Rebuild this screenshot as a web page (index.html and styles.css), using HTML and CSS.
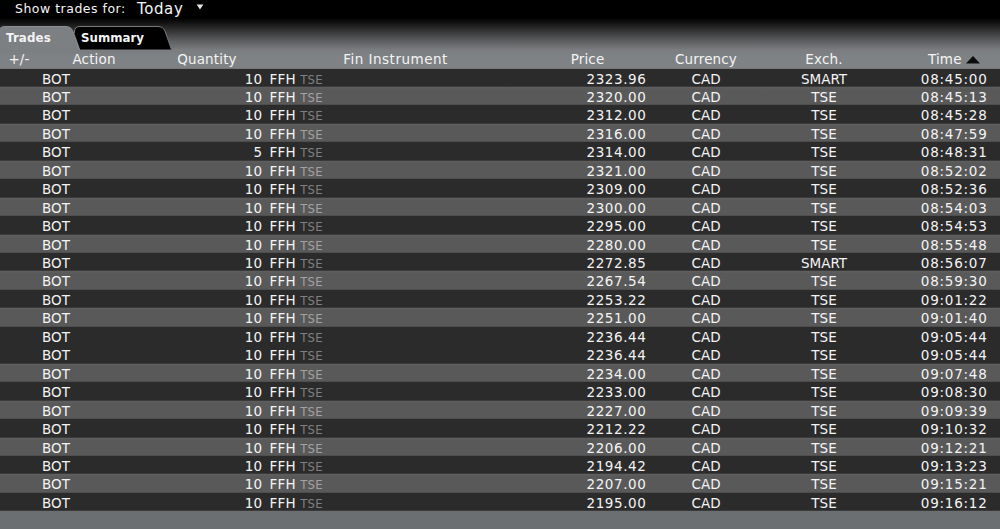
FILE: index.html
```html
<!DOCTYPE html>
<html lang="en">
<head>
    <meta charset="UTF-8">
    <meta name="viewport" content="width=device-width, initial-scale=1.0">
    <title>Trades</title>
    <link rel="stylesheet" href="styles.css">
</head>
<body>
    <header>
        <span class="filter-label">Show trades for:</span>
        <span class="filter-value">Today</span>
        <svg class="filter-arrow" width="8" height="6" viewBox="0 0 8 6"><path d="M0.6 0.5H7.4L4 5.5Z" fill="#e6e6e6"/></svg>
    </header>

    <!-- Tabs -->
    <nav class="tabs">
        <div class="tab active">
            <svg width="80" height="24" viewBox="0 0 80 24"><path d="M0 2.5Q1.5 0.5 5 0.5H66Q71 0.5 72.5 4.5L79.5 24H0Z" fill="#7d8083"/><path d="M0 2.5Q1.5 0.5 5 0.5H66Q71 0.5 72.5 4.5L79.5 24" fill="none" stroke="#8b8e90"/></svg>
            <span>Trades</span>
        </div>
        <div class="tab">
            <svg width="98" height="24" viewBox="0 0 98 24"><path d="M0.5 7V5Q1 0.5 6 0.5H84Q89 0.5 91 5L97.5 23.5H6Z" fill="#000"/><path d="M0.5 7V5Q1 0.5 6 0.5H84Q89 0.5 91 5L97.5 23.5" fill="none" stroke="#77797b"/></svg>
            <span>Summary</span>
        </div>
    </nav>

    <main>
        <div class="row head">
            <span>+/-</span>
            <span>Action</span>
            <span>Quantity</span>
            <span class="wide">Fin Instrument</span>
            <span>Price</span>
            <span>Currency</span>
            <span>Exch.</span>
            <span class="time-head">Time <svg width="14" height="8" viewBox="0 0 14 8"><path d="M0 7.5L7 0L14 7.5Z" fill="#0c0c0c"/></svg></span>
        </div>
        <div id="trades"></div>
    </main>

    <script>
        // quantity, price, exchange, time
        const trades = [
            [10, "2323.96", "SMART", "08:45:00"],
            [10, "2320.00", "TSE", "08:45:13"],
            [10, "2312.00", "TSE", "08:45:28"],
            [10, "2316.00", "TSE", "08:47:59"],
            [5, "2314.00", "TSE", "08:48:31"],
            [10, "2321.00", "TSE", "08:52:02"],
            [10, "2309.00", "TSE", "08:52:36"],
            [10, "2300.00", "TSE", "08:54:03"],
            [10, "2295.00", "TSE", "08:54:53"],
            [10, "2280.00", "TSE", "08:55:48"],
            [10, "2272.85", "SMART", "08:56:07"],
            [10, "2267.54", "TSE", "08:59:30"],
            [10, "2253.22", "TSE", "09:01:22"],
            [10, "2251.00", "TSE", "09:01:40"],
            [10, "2236.44", "TSE", "09:05:44"],
            [10, "2236.44", "TSE", "09:05:44"],
            [10, "2234.00", "TSE", "09:07:48"],
            [10, "2233.00", "TSE", "09:08:30"],
            [10, "2227.00", "TSE", "09:09:39"],
            [10, "2212.22", "TSE", "09:10:32"],
            [10, "2206.00", "TSE", "09:12:21"],
            [10, "2194.42", "TSE", "09:13:23"],
            [10, "2207.00", "TSE", "09:15:21"],
            [10, "2195.00", "TSE", "09:16:12"]
        ];

        const container = document.getElementById("trades");
        let light = true;

        trades.forEach(([qty, price, exch, time], i) => {
            // Fills from the same second share one stripe
            if (i === 0 || time !== trades[i - 1][3]) light = !light;
            const joined = i + 1 < trades.length && time === trades[i + 1][3];

            const row = document.createElement("div");
            row.className = "row trade" + (light ? " light" : "") + (joined ? " joined" : "");
            row.innerHTML = `<span></span>
                <span class="action">BOT</span>
                <span class="qty">${qty}</span>
                <span class="instrument">FFH <small>TSE</small></span>
                <span class="price">${price}</span>
                <span class="currency">CAD</span>
                <span class="exch">${exch}</span>
                <span class="time">${time}</span>`;
            container.appendChild(row);
        });
    </script>
</body>
</html>
```
FILE: styles.css
```css
body {
    font-family: Verdana, "DejaVu Sans", sans-serif;
    font-size: 13.5px;
    margin: 0;
    height: 529px;
    overflow: hidden;
    color: #f4f4f4;
    background: linear-gradient(#000 0, #000 18px, #1c1c1c 25px, #5d5e60 41px, #7b7d80 50px, #7e8284 56px, #7e8284 68px, #6b6f72 69px);
}

header {
    display: flex;
    height: 26px;
    padding-left: 15px;
    line-height: 17px;
    white-space: nowrap;
}

.filter-label {
    width: 122px;
    font-size: 12.5px;
    letter-spacing: 0.5px;
}

.filter-value {
    width: 59px;
    font-size: 15px;
    line-height: 19px;
    letter-spacing: 0.6px;
}

.filter-arrow {
    margin-top: 4px;
}

.tabs {
    display: flex;
    height: 24px;
    font-size: 11.8px;
    font-weight: bold;
}

.tab {
    display: grid;
    width: 98px;
    line-height: 24px;
}

.tab svg,
.tab span {
    grid-area: 1 / 1;
}

.tab span {
    padding-left: 7px;
}

.tab.active {
    width: 74px;
    z-index: 1;
}

.tab.active span {
    padding-left: 6px;
    letter-spacing: 0.15px;
}

.row {
    display: grid;
    grid-template-columns: 38px 112px 114px 263px 121px 116px 120px 116px;
    white-space: nowrap;
}

.head {
    height: 18.5px;
    line-height: 19px;
    text-align: center;
    letter-spacing: 0.15px;
}

.head .wide {
    letter-spacing: 0.5px;
}

.time-head {
    padding-left: 24px;
}

.trade {
    height: 18.46px;
    line-height: 20px;
    background: linear-gradient(#2b2b2b 92%, #424242);
}

.trade.light {
    background: linear-gradient(#606060, #595959 12%, #595959 92%, #484848);
}

.trade.joined {
    background: #2b2b2b;
}

.action {
    padding-left: 4px;
}

.qty {
    padding-right: 2px;
    text-align: right;
}

.instrument {
    padding-left: 5.5px;
    letter-spacing: 0.2px;
}

.instrument small {
    font-size: 11.7px;
    color: #808080;
}

.light small {
    color: #a2a2a2;
}

.price {
    padding-right: 1.5px;
    text-align: right;
    letter-spacing: 0.6px;
}

.currency,
.exch {
    text-align: center;
}

.time {
    padding-right: 12.5px;
    text-align: right;
    letter-spacing: 0.75px;
}
```
